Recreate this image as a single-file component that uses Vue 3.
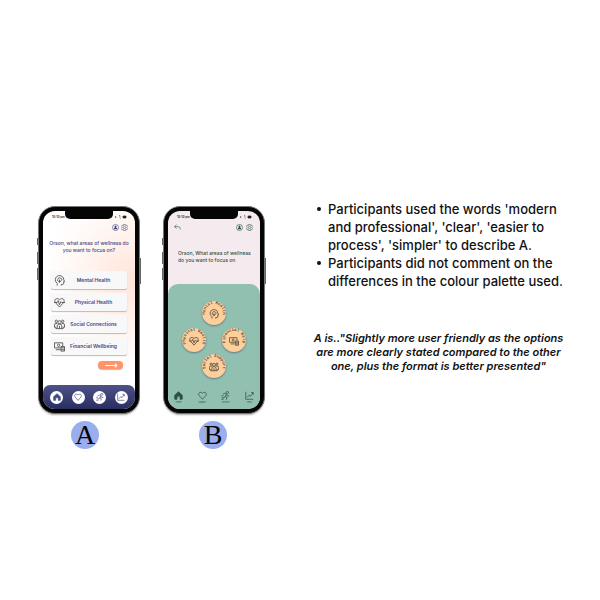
<script setup>
const options = [
  { label: 'Mental Health', ring: 'Mental Health', icon: 'head', area: 'top' },
  { label: 'Physical Health', ring: 'Physical Health', icon: 'pulse', area: 'left' },
  { label: 'Social Connections', ring: 'Social Support', icon: 'group', area: 'bottom' },
  { label: 'Financial Wellbeing', ring: 'Financial Help', icon: 'money', area: 'right' },
]
const tabs = [
  { label: 'Home', icon: 'home' },
  { label: 'Support', icon: 'heart' },
  { label: 'Routine', icon: 'run' },
  { label: 'Track', icon: 'chart' },
]
</script>

<template>
  <svg class="sprite" aria-hidden="true">
    <symbol id="head" viewBox="0 0 24 24">
      <path d="M7 23v-5C3 15 2 11 3.500 7 5 3 9 1 13 1.500c5 .5 8 4 8 8l2 5h-2v4q0 2-2 2h-3V23" />
      <path d="M10 14c-3-1-3-4-1-5 0-3 3-4 5-2 3 0 4 4 2 5-1 3-4 3-6 2zM12 10v7" />
    </symbol>
    <symbol id="pulse" viewBox="0 0 24 24">
      <path d="M12 22 3 12C-1 6 6 0 12 6c6-6 13 0 9 6z" />
      <path d="M0 12h7l2-4 3 9 3-7 2 2h7" />
    </symbol>
    <symbol id="group" viewBox="0 0 24 24">
      <circle cx="12" cy="7" r="3.500" /><circle cx="5" cy="5" r="2.500" /><circle cx="19" cy="5" r="2.500" />
      <path d="M7 21v-6q0-4 5-4t5 4v6zM7 10q-6-2-6 3v5h3v3h3M17 10q6-2 6 3v5h-3v3h-3M12 15v6" />
    </symbol>
    <symbol id="money" viewBox="0 0 24 24">
      <path d="M14 15H1V4h18v7M4 19h9" /><circle cx="10" cy="9.500" r="2.500" />
      <path d="M15 12h8v10h-8zM15 15h8M15 19h8" />
    </symbol>
    <symbol id="home" viewBox="0 0 24 24">
      <path fill="currentColor" d="M2 11 12 2l10 9v11h-6v-8H8v8H2z" />
    </symbol>
    <symbol id="heart" viewBox="0 0 24 24">
      <path d="M12 22 3 12C-1 6 6 0 12 6c6-6 13 0 9 6z" />
    </symbol>
    <symbol id="run" viewBox="0 0 24 24">
      <circle cx="17" cy="4" r="3" />
      <path d="M5 9l5-3 5 3-4 6 5 2-2 6M11 14l-3 4H2M14 9l3 4h5M1 13h5M1 22h6" />
    </symbol>
    <symbol id="chart" viewBox="0 0 24 24">
      <path d="M2 2v20h20M6 17l5-6 4 3 6-9M16 4h6v6" />
    </symbol>
    <symbol id="user" viewBox="0 0 24 24">
      <circle cx="12" cy="12" r="10.500" />
      <path fill="currentColor" stroke="none" d="M12 5a4 4 0 0 1 2 7q4 1 4 6H6q0-5 4-6a4 4 0 0 1 2-7z" />
    </symbol>
    <symbol id="gear" viewBox="0 0 24 24">
      <path d="M9 1h6l1 4 4-1 3 5-3 3 3 3-3 5-4-1-1 4H9l-1-4-4 1-3-5 3-3-3-3 3-5 4 1z" />
      <circle cx="12" cy="12" r="4" />
    </symbol>
    <symbol id="back" viewBox="0 0 24 24">
      <path d="M9 2 2 9l7 7M2 9h12q8 0 8 10" />
    </symbol>
    <symbol id="signal" viewBox="0 0 36 12">
      <path d="M2 3v6M12 3q4-2 5 1M14 8l3 2" />
      <path fill="currentColor" d="M24 3h9v6h-9z" />
    </symbol>
  </svg>

  <main class="page">
    <section class="designs">
      <figure class="design">
        <div class="phone">
          <span class="key silent"></span><span class="key up"></span><span class="key down"></span><span class="key power"></span>
          <div class="screen list-screen">
            <span class="notch"></span>
            <div class="status"><span>10:10 pm</span><svg><use href="#signal" /></svg></div>
            <div class="tools">
              <span class="grow"></span>
              <button aria-label="Profile"><svg><use href="#user" /></svg></button>
              <button aria-label="Settings"><svg><use href="#gear" /></svg></button>
            </div>
            <h2>Orson, what areas of wellness do<br />you want to focus on?</h2>
            <div class="cards">
              <button v-for="o in options" :key="o.label" class="card">
                <svg><use :href="'#' + o.icon" /></svg><span>{{ o.label }}</span>
              </button>
            </div>
            <button class="next" aria-label="Next">
              <svg viewBox="0 0 24 8"><path d="M2 4h20M19 1l3 3-3 3" /></svg>
            </button>
            <nav class="tabs">
              <button v-for="t in tabs" :key="t.label" :aria-label="t.label"><svg><use :href="'#' + t.icon" /></svg></button>
            </nav>
          </div>
        </div>
        <figcaption>A</figcaption>
      </figure>

      <figure class="design">
        <div class="phone">
          <span class="key silent"></span><span class="key up"></span><span class="key down"></span><span class="key power"></span>
          <div class="screen ring-screen">
            <span class="notch"></span>
            <div class="status"><span>10:10 pm</span><svg><use href="#signal" /></svg></div>
            <div class="tools">
              <button aria-label="Back"><svg><use href="#back" /></svg></button>
              <span class="grow"></span>
              <button aria-label="Profile"><svg><use href="#user" /></svg></button>
              <button aria-label="Settings"><svg><use href="#gear" /></svg></button>
            </div>
            <h2>Orson, What areas of wellness<br />do you want to focus on</h2>
            <div class="panel">
              <div class="rings">
                <button v-for="o in options" :key="o.ring" class="ring" :class="o.area">
                  <svg viewBox="0 0 24 24">
                    <path :id="'arc-' + o.area" class="arc" d="M4 16A9 9 0 1 1 20 16" />
                    <text><textPath :href="'#arc-' + o.area" startOffset="50%" text-anchor="middle">{{ o.ring }}</textPath></text>
                    <use :href="'#' + o.icon" x="7" y="8" width="10" height="10" />
                  </svg>
                </button>
              </div>
              <nav class="tabs">
                <button v-for="t in tabs" :key="t.label"><svg><use :href="'#' + t.icon" /></svg><span>{{ t.label }}</span></button>
              </nav>
            </div>
          </div>
        </div>
        <figcaption>B</figcaption>
      </figure>
    </section>

    <section class="notes">
      <ul>
        <li><span>Participants used the words 'modern<br />and professional', 'clear', 'easier to<br />process', 'simpler' to describe A.</span></li>
        <li><span>Participants did not comment on the<br />differences in the colour palette used.</span></li>
      </ul>
      <blockquote>A is.."Slightly more user friendly as the options<br />are more clearly stated compared to the other<br />one, plus the format is better presented"</blockquote>
    </section>
  </main>
</template>

<style>
body { margin: 0; background: #fff; }
</style>

<style scoped>
* { box-sizing: border-box; }
.sprite { position: absolute; width: 0; height: 0; }
svg { display: block; fill: none; stroke: currentColor; stroke-width: 2; }
button { border: 0; padding: 0; margin: 0; background: none; color: inherit; font: inherit; display: flex; align-items: center; justify-content: center; }
.page {
  display: grid;
  grid-template-columns: 227px 1fr;
  gap: 44px;
  padding: 206px 32px 32px 38px;
  font-family: Inter, "Open Sans", sans-serif;
  color: #111;
}
.designs { display: flex; justify-content: space-between; align-items: flex-start; }
.design { margin: 0; display: flex; flex-direction: column; align-items: center; gap: 7px; }
.phone {
  position: relative;
  width: 102px;
  padding: 4px;
  border: 1px solid #777;
  border-radius: 17px;
  background: #050505;
  box-shadow: 0 2px 2px -1px #aaa;
}
.key { position: absolute; width: 1px; background: #666; left: -2px; }
.silent { top: 31px; height: 7px; }
.up { top: 45px; height: 12px; }
.down { top: 61px; height: 12px; }
.power { left: auto; right: -2px; top: 51px; height: 26px; }
.screen { position: relative; display: flex; flex-direction: column; height: 198px; border-radius: 12px; overflow: hidden; }
.notch { position: absolute; top: -1px; left: 22px; right: 22px; height: 9px; border-radius: 0 0 5px 5px; background: #050505; }
.status { display: flex; justify-content: space-between; padding: 4px 8px 0 9px; height: 12px; font-size: 3px; line-height: 4px; font-weight: 600; color: #222; }
.status svg { width: 12px; height: 4px; }
.tools { display: flex; gap: 2px; height: 8px; padding: 0 7px 0 6px; align-items: center; }
.tools svg { width: 7px; height: 7px; }
.grow { flex: 1; }
h2 { margin: 0; font-size: 5px; line-height: 7px; font-weight: 500; white-space: nowrap; }

.list-screen {
  color: #444984;
  background: radial-gradient(circle at 100% 35%, #ffe4d9 0, #fff2ec 28%, #fffcfb 50%, #fff 60%);
}
.list-screen h2 { margin-top: 9px; text-align: center; }
.cards { display: grid; gap: 4px; margin: 17px 8px 0; }
.card { height: 18px; padding: 0 5px 0 3px; border-radius: 2px; background: #f9f8f9; box-shadow: 0 1px 1px #bbb; font-size: 5px; line-height: 7px; font-weight: 600; }
.card svg { flex: none; width: 11px; height: 11px; color: #555; }
.card span { flex: 1; text-align: center; white-space: nowrap; }
.next { align-self: flex-end; width: 25px; height: 8px; margin: 6px 12px 0 0; border-radius: 4px; background: #ff946b; color: #fff; box-shadow: 0 1px 1px #bbb; }
.next svg { width: 14px; height: 5px; }
.list-screen .tabs { display: flex; justify-content: space-between; align-items: center; height: 24px; margin-top: auto; padding: 0 7px; border-radius: 7px 7px 0 0; background: linear-gradient(#4e5288, #292d60); }
.list-screen .tabs button { width: 13px; height: 13px; border-radius: 50%; background: #fff; }
.list-screen .tabs svg { width: 8px; height: 8px; }

.ring-screen { color: #2b5148; background: #f5ebee; }
.ring-screen .tools { gap: 3px; }
.ring-screen h2 { margin: 19px 0 0 10px; }
.panel { flex: 1; display: flex; flex-direction: column; margin-top: 20px; border-radius: 10px 10px 0 0; background: #91c0b1; }
.rings { display: grid; grid-template: "top top" 26px "left right" 27px "bottom bottom" 26px / 40px 40px; justify-content: center; place-items: center; margin-top: 16px; }
.ring { width: 24px; height: 24px; border-radius: 50%; background: #fccf9c; color: #5a4b3a; box-shadow: 0 1px 2px #678; }
.ring svg { width: 24px; height: 24px; }
.ring text { font-family: "Liberation Mono", monospace; font-size: 4px; font-weight: 700; fill: currentColor; stroke: none; }
.arc { stroke: none; }
.top { grid-area: top; }
.left { grid-area: left; }
.right { grid-area: right; }
.bottom { grid-area: bottom; }
.ring-screen .tabs { display: flex; justify-content: space-between; margin-top: auto; padding: 0 6px 5px; }
.ring-screen .tabs button { flex-direction: column; gap: 1px; width: 9px; font-size: 2px; line-height: 3px; }
.ring-screen .tabs svg { width: 9px; height: 9px; }

figcaption { width: 28px; height: 28px; margin-right: 8px; border-radius: 50%; background: #9aaeed; color: #050505; font: 28px/28px "Liberation Serif", serif; text-align: center; }
.design + .design figcaption { margin-right: 2px; }

ul { margin: -6px 0 0; padding-left: 8px; list-style: none; font-size: 13px; line-height: 18px; font-weight: 500; white-space: nowrap; }
li { display: flex; gap: 7px; }
li::before { content: ""; flex: none; width: 4px; height: 4px; margin-top: 7px; border-radius: 50%; background: currentColor; }
blockquote { margin: 41px 0 0; font-size: 11px; line-height: 14px; font-weight: 600; font-style: italic; text-align: center; white-space: nowrap; }
</style>
